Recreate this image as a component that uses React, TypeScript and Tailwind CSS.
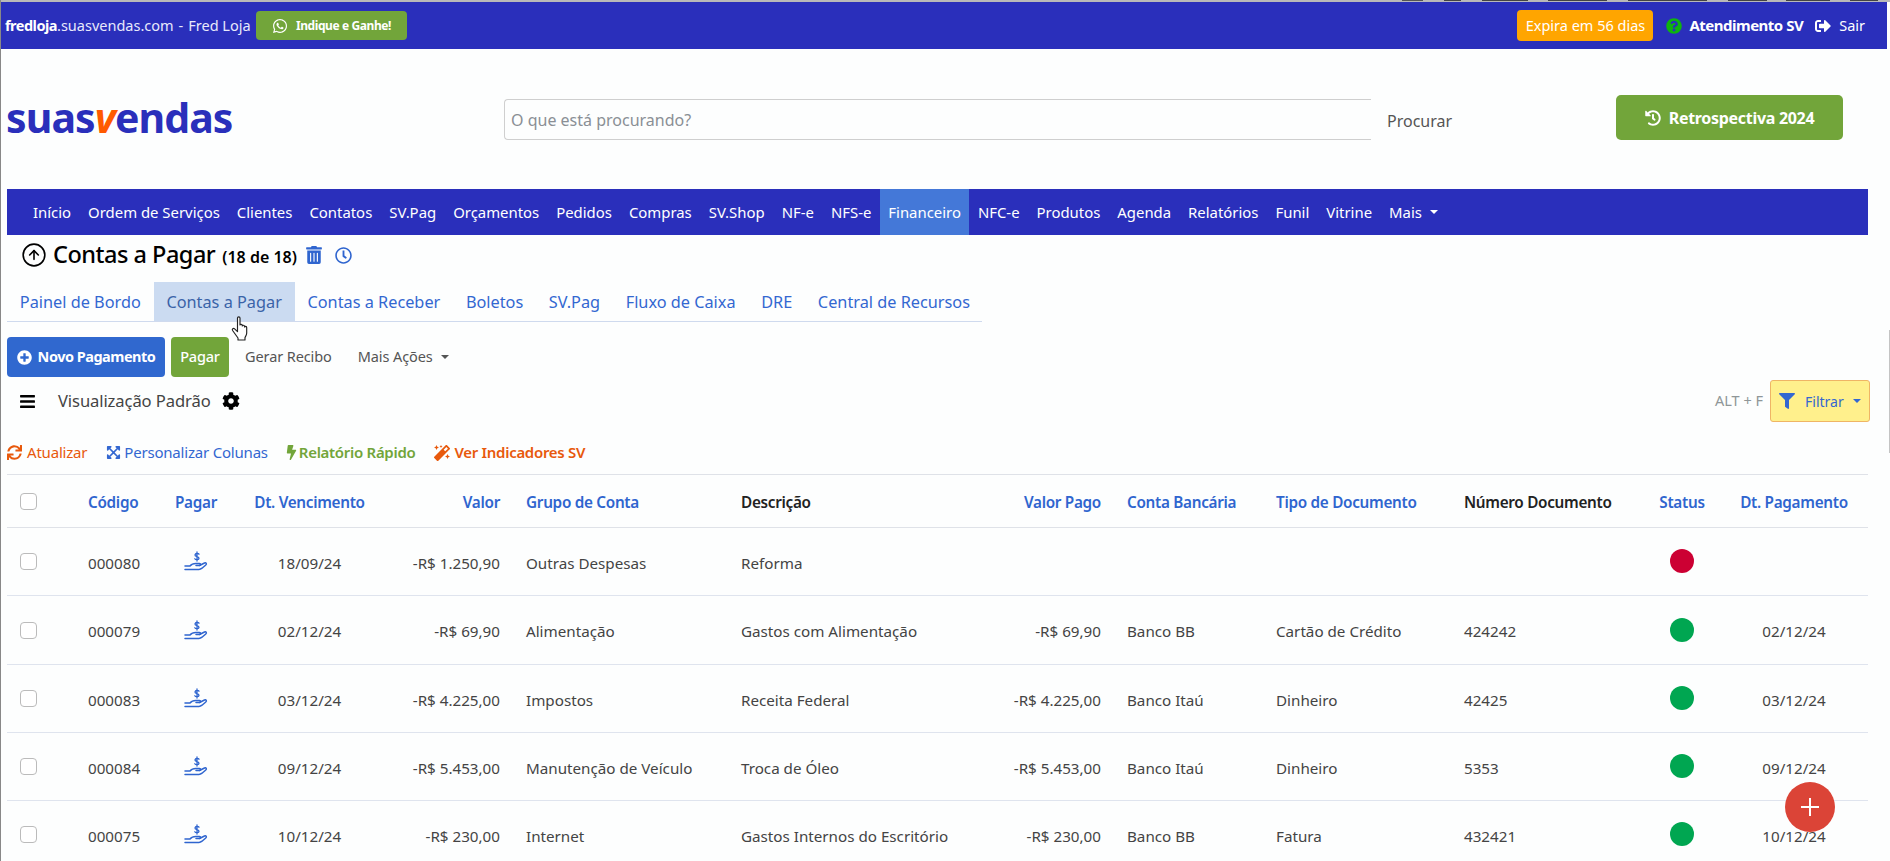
import React from "react";
import { FaWhatsapp, FaQuestionCircle, FaSignOutAlt, FaHistory, FaTrashAlt, FaRegClock, FaPlusCircle, FaBars, FaCog, FaFilter, FaSync, FaExpandArrowsAlt, FaBolt, FaMagic } from "react-icons/fa";
import { CircleArrowUp } from "lucide-react";

const navItems = ["Início", "Ordem de Serviços", "Clientes", "Contatos", "SV.Pag", "Orçamentos", "Pedidos", "Compras", "SV.Shop", "NF-e", "NFS-e", "Financeiro", "NFC-e", "Produtos", "Agenda", "Relatórios", "Funil", "Vitrine"];
const tabs = ["Painel de Bordo", "Contas a Pagar", "Contas a Receber", "Boletos", "SV.Pag", "Fluxo de Caixa", "DRE", "Central de Recursos"];

type Row = { id: string; venc: string; valor: string; grupo: string; desc: string; pago: string; conta: string; tipo: string; num: string; paid: boolean; dtp: string; h: string };
const rows: Row[] = [
  { id: "000080", venc: "18/09/24", valor: "-R$ 1.250,90", grupo: "Outras Despesas", desc: "Reforma", pago: "", conta: "", tipo: "", num: "", paid: false, dtp: "", h: "h-[68px]" },
  { id: "000079", venc: "02/12/24", valor: "-R$ 69,90", grupo: "Alimentação", desc: "Gastos com Alimentação", pago: "-R$ 69,90", conta: "Banco BB", tipo: "Cartão de Crédito", num: "424242", paid: true, dtp: "02/12/24", h: "h-[69px]" },
  { id: "000083", venc: "03/12/24", valor: "-R$ 4.225,00", grupo: "Impostos", desc: "Receita Federal", pago: "-R$ 4.225,00", conta: "Banco Itaú", tipo: "Dinheiro", num: "42425", paid: true, dtp: "03/12/24", h: "h-[68px]" },
  { id: "000084", venc: "09/12/24", valor: "-R$ 5.453,00", grupo: "Manutenção de Veículo", desc: "Troca de Óleo", pago: "-R$ 5.453,00", conta: "Banco Itaú", tipo: "Dinheiro", num: "5353", paid: true, dtp: "09/12/24", h: "h-[68px]" },
  { id: "000075", venc: "10/12/24", valor: "-R$ 230,00", grupo: "Internet", desc: "Gastos Internos do Escritório", pago: "-R$ 230,00", conta: "Banco BB", tipo: "Fatura", num: "432421", paid: true, dtp: "10/12/24", h: "h-[68px]" },
];

function Caret({ className }: { className: string }) {
  return <span className={"inline-block w-0 h-0 border-x-[4px] border-x-transparent border-t-[4px] " + className} />;
}

function PayIcon() {
  return (
    <svg width="24" height="21" viewBox="0 0 24 21" fill="none" stroke="#2f65cf" strokeWidth="1.5" strokeLinecap="round" strokeLinejoin="round" className="mx-auto">
      <path d="M15 3.200c-.6-1-3.600-1.100-4 .6-.4 2 4 1.500 4 3.500 0 1.700-3.400 1.800-4.200.4M13 1v9" strokeWidth="1.300" />
      <path d="M1 15h5c2-2.500 4-2.800 7-2.500h2.500c1.500 0 1.500 2 0 2h-3.500" />
      <path d="M15.500 14.500l5-2.500c1.700-.6 2.500 1 1.300 2l-3.800 3.200c-1 .8-1.800 1.300-3 1.300H1" />
    </svg>
  );
}

function HandCursor() {
  return (
    <svg width="18" height="25" viewBox="0 0 18 25" fill="#fff" stroke="#222" strokeWidth="1.150" strokeLinejoin="round" className="absolute left-[230px] top-[316px]">
      <path d="M6.500 2c0-1.500 2.500-1.500 2.500 0v7c0-1 2.300-1 2.300.2v.8c0-1 2.200-1 2.200.3v.7c0-1 2.200-.8 2.200.5v5.500c0 2-1 3-1.700 4.500v2.500H7v-2L1.600 14.500c-1-1.500.8-2.800 2-1.600l2.900 2.800Z" />
    </svg>
  );
}

export default function App() {
  return (
    <div className="relative h-[861px] w-[1890px] overflow-hidden bg-[#fdfefe] font-['Noto_Sans',sans-serif] text-[15.200px] text-[#444] border-l border-[#888]">
      <div className="flex h-[2px] w-[1890px] -ml-px items-start bg-[#b9b9b9] pl-[1402px]">
        <div className="h-px w-[21px] bg-[#555]" /><div className="w-[21px]" />
        <div className="h-px w-[17px] bg-[#444]" /><div className="w-[21px]" />
        <div className="h-px w-[46px] bg-[#444]" /><div className="w-[20px]" />
        <div className="h-px w-[59px] bg-[#444]" /><div className="w-[21px]" />
        <div className="h-px w-[79px] bg-[#444]" /><div className="w-[21px]" />
        <div className="h-px w-[39px] bg-[#444]" /><div className="w-[19px]" />
        <div className="h-px w-[44px] bg-[#444]" /><div className="w-[20px]" />
        <div className="h-px w-[28px] bg-[#444]" />
      </div>

      {/* top bar */}
      <div className="flex h-[47px] w-[1886px] items-center bg-[#2a2fbb] pl-[4px] text-[14.500px] text-white">
        <div className="flex w-[251px] text-[#e8e9fb]">
          <span className="font-bold tracking-[-0.5px] text-white">fredloja</span>
          <span>.suasvendas.com</span>
          <span className="ml-[5px]">-</span>
          <span className="ml-[5px]">Fred Loja</span>
        </div>
        <a className="flex h-[29px] w-[151px] items-center justify-center gap-[8px] rounded-[4px] bg-[#72a53a] text-[12px] font-bold">
          <FaWhatsapp className="text-[16px]" />
          <span className="tracking-[-0.4px]">Indique e Ganhe!</span>
        </a>
        <div className="ml-auto flex items-center pr-[22px]">
          <span className="flex h-[31px] w-[136px] items-center justify-center rounded-[4px] bg-[#ffa500]">Expira em 56 dias</span>
          <FaQuestionCircle className="ml-[13px] text-[16px] text-[#0eb40e]" />
          <span className="ml-[7px] text-[15px] font-bold tracking-[-0.5px]">Atendimento SV</span>
          <FaSignOutAlt className="ml-[12px] text-[16px]" />
          <span className="ml-[8px]">Sair</span>
        </div>
      </div>

      {/* header */}
      <div className="flex h-[140px] items-center pl-[5px]">
        <div className="flex w-[498px] -mt-[3px] items-baseline text-[41px] font-bold leading-none text-[#2a2fbb] tracking-[-0.900px]">
          suas<span className="italic text-[#ff5a00]">v</span>endas
        </div>
        <div className="flex h-[41px] w-[867px] items-center rounded-l-[4px] border-y border-l border-[#cfcfcf] pl-[6px] pt-[2px] text-[16px] text-[#8a8f95]">O que está procurando?</div>
        <span className="ml-[16px] w-[229px] pt-[4px] text-[16px] text-[#555]">Procurar</span>
        <a className="-mt-[3px] flex h-[45px] w-[227px] items-center justify-center gap-[8px] rounded-[5px] bg-[#72a53a] text-[16px] font-bold text-white tracking-[-0.3px]">
          <FaHistory className="text-[16px]" />
          Retrospectiva 2024
        </a>
      </div>

      {/* nav */}
      <nav className="ml-[6px] flex h-[46px] w-[1861px] items-stretch bg-[#2a2fbb] pl-[17.500px] text-[14.900px] text-white">
        {navItems.map((n) => (
          <a key={n} className={"flex items-center px-[8.500px] " + (n === "Financeiro" ? "bg-[#4478d8]" : "")}>{n}</a>
        ))}
        <a className="flex items-center gap-[8px] px-[8.500px]">Mais <Caret className="border-t-white" /></a>
      </nav>

      {/* title */}
      <div className="flex h-[47px] items-center pb-[7px] pl-[20px] text-black">
        <CircleArrowUp size={26} strokeWidth={1.500} />
        <span className="ml-[6px] text-[23.500px] font-medium tracking-[-0.500px]">Contas a Pagar</span>
        <span className="ml-[7px] mt-[3px] text-[16px] font-semibold">(18 de 18)</span>
        <FaTrashAlt className="ml-[8px] text-[18px] text-[#2f65cf]" />
        <FaRegClock className="ml-[12px] text-[17px] text-[#2f65cf]" />
      </div>

      {/* tabs */}
      <div className="ml-[6px] flex h-[40px] w-[975px] border-b border-[#cfdaee] text-[16.300px] whitespace-nowrap text-[#3367d1]">
        {tabs.map((t) => (
          <a key={t} className={"flex shrink-0 items-center pt-[2px] px-[12.800px] " + (t === "Contas a Pagar" ? "bg-[#cbdbf1] text-[#3a63a8]" : "")}>{t}</a>
        ))}
      </div>
      <HandCursor />

      {/* buttons */}
      <div className="ml-[6px] mt-[15px] flex h-[40px] items-center text-[14.500px]">
        <a className="flex h-[40px] w-[158px] items-center justify-center gap-[6px] rounded-[4px] bg-[#3068cf] font-bold text-white tracking-[-0.5px]">
          <FaPlusCircle className="text-[15px]" />
          Novo Pagamento
        </a>
        <a className="ml-[6px] flex h-[40px] w-[58px] items-center justify-center rounded-[4px] bg-[#72a53a] text-white tracking-[-0.2px] font-medium">Pagar</a>
        <span className="ml-[16px] tracking-[-0.1px] text-[#555]">Gerar Recibo</span>
        <span className="ml-[26px] tracking-[-0.1px] text-[#555]">Mais Ações</span>
        <Caret className="ml-[8px] border-t-[#555]" />
      </div>

      {/* view row */}
      <div className="mt-[3px] flex h-[42px] items-center pl-[18px] pr-[20px]">
        <FaBars className="text-[17px] text-black" />
        <span className="ml-[22px] text-[16.600px] tracking-[-0.100px] text-[#444]">Visualização Padrão</span>
        <FaCog className="ml-[11px] text-[18px] text-black" />
        <span className="ml-auto text-[14.500px] text-[#8f9698]">ALT + F</span>
        <a className="ml-[7px] flex h-[42px] w-[100px] items-center rounded-[3px] border border-[#efb565] bg-[#fff08c] pl-[8px] text-[#3367d1]">
          <FaFilter className="text-[16px]" />
          <span className="ml-[10px] text-[14px]">Filtrar</span>
          <Caret className="ml-[9px] border-t-[#3367d1]" />
        </a>
      </div>

      {/* actions */}
      <div className="flex h-[52px] items-center pt-[9px] pl-[6px] text-[15px]">
        <FaSync className="text-[15px] text-[#e8590c]" />
        <span className="ml-[5px] tracking-[-0.2px] text-[#e8590c]">Atualizar</span>
        <FaExpandArrowsAlt className="ml-[19px] text-[15px] text-[#3367d1]" />
        <span className="ml-[3px] tracking-[-0.2px] text-[#3367d1]">Personalizar Colunas</span>
        <FaBolt className="ml-[16px] text-[15px] text-[#72a53a]" />
        <span className="ml-[0px] font-semibold tracking-[-0.3px] text-[#72a53a]">Relatório Rápido</span>
        <FaMagic className="ml-[19px] text-[16px] text-[#e8590c]" />
        <span className="ml-[4px] font-semibold tracking-[-0.3px] text-[#e8590c]">Ver Indicadores SV</span>
      </div>

      {/* table */}
      <table className="ml-[6px] w-[1861px] table-fixed border-collapse">
        <colgroup>
          <col className="w-[73px]" /><col className="w-[70px]" /><col className="w-[92px]" /><col className="w-[135px]" /><col className="w-[131px]" /><col className="w-[225px]" />
          <col className="w-[217px]" /><col className="w-[169px]" /><col className="w-[148px]" /><col className="w-[189px]" /><col className="w-[171px]" /><col className="w-[110px]" /><col className="w-[131px]" />
        </colgroup>
        <thead>
          <tr className="h-[53px] border-y border-[#dfe2e8] text-[15.300px] tracking-[-0.3px] text-[#2f65cf]">
            <th className="pl-[13px] text-left align-middle"><span className="block h-[17px] w-[17px] rounded-[4px] border border-[#bbb] bg-white" /></th>
            <th className="pl-[8px] pt-[2px] text-left font-semibold">Código</th>
            <th className="pt-[2px] text-center font-semibold">Pagar</th>
            <th className="pt-[2px] text-center font-semibold">Dt. Vencimento</th>
            <th className="pr-[8px] pt-[2px] text-right font-semibold">Valor</th>
            <th className="pl-[18px] pt-[2px] text-left font-semibold">Grupo de Conta</th>
            <th className="pl-[8px] pt-[2px] text-left font-semibold text-[#222]">Descrição</th>
            <th className="pr-[18px] pt-[2px] text-right font-semibold">Valor Pago</th>
            <th className="pl-[8px] pt-[2px] text-left font-semibold">Conta Bancária</th>
            <th className="pl-[9px] pt-[2px] text-left font-semibold">Tipo de Documento</th>
            <th className="pl-[8px] pt-[2px] text-left font-semibold text-[#222]">Número Documento</th>
            <th className="pt-[2px] text-center font-semibold">Status</th>
            <th className="pr-[17px] pt-[2px] text-center font-semibold">Dt. Pagamento</th>
          </tr>
        </thead>
        <tbody>
          {rows.map((r) => (
            <tr key={r.id} className={"border-b border-[#dfe4ee] " + r.h}>
              <td className="pl-[13px]"><span className="block h-[17px] w-[17px] rounded-[4px] border border-[#bbb] bg-white" /></td>
              <td className="pl-[8px] pt-[3px]">{r.id}</td>
              <td><PayIcon /></td>
              <td className="pt-[3px] text-center">{r.venc}</td>
              <td className="pr-[8px] pt-[3px] text-right">{r.valor}</td>
              <td className="pl-[18px] pt-[3px]">{r.grupo}</td>
              <td className="pl-[8px] pt-[3px]">{r.desc}</td>
              <td className="pr-[18px] pt-[3px] text-right">{r.pago}</td>
              <td className="pl-[8px] pt-[3px]">{r.conta}</td>
              <td className="pl-[9px] pt-[3px]">{r.tipo}</td>
              <td className="pl-[8px] pt-[3px]">{r.num}</td>
              <td className="pb-[1px]"><span className={"mx-auto block h-[24px] w-[24px] rounded-full " + (r.paid ? "bg-[#00a651]" : "bg-[#cc0033]")} /></td>
              <td className="pr-[17px] pt-[3px] text-center">{r.dtp}</td>
            </tr>
          ))}
        </tbody>
      </table>

      <div className="absolute left-[1784px] top-[782px] flex h-[50px] w-[50px] items-center justify-center rounded-full bg-[#db4437] text-white">
        <span className="absolute h-[2px] w-[18px] bg-white" />
        <span className="absolute h-[18px] w-[2px] bg-white" />
      </div>
      <div className="absolute left-[1888px] top-[330px] h-[123px] w-px bg-[#c4c4c4]" />
    </div>
  );
}
